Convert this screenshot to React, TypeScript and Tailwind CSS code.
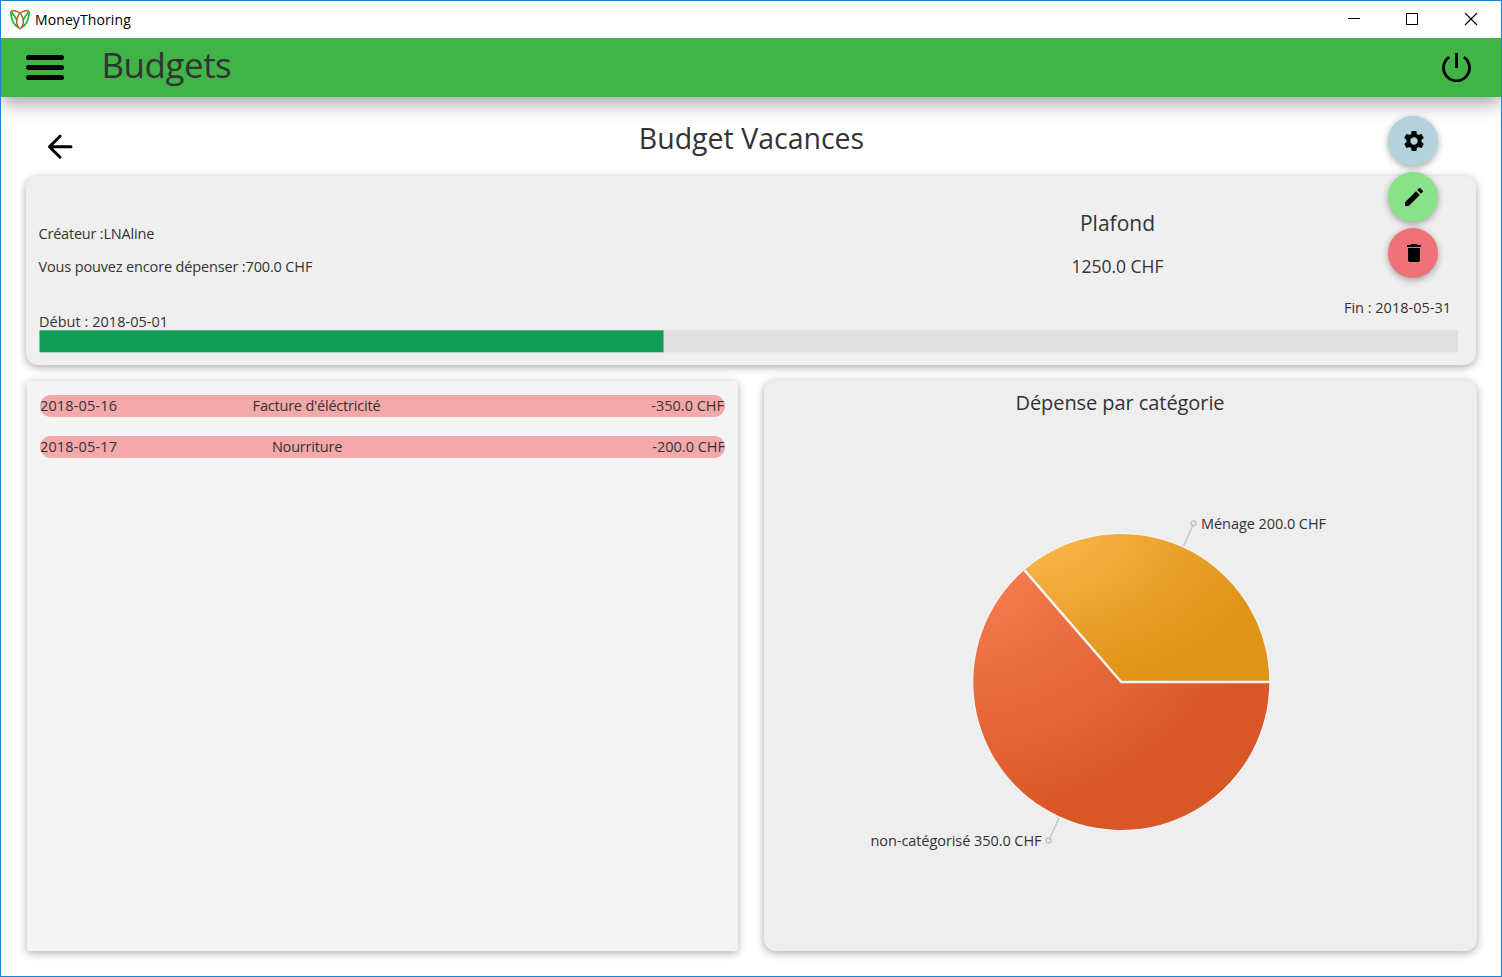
import type { ReactNode } from "react";

const operations = [
  { date: "2018-05-16", label: "Facture d'éléctricité", amount: "-350.0 CHF", labelClass: "w-[553px]", amountClass: "pr-px" },
  { date: "2018-05-17", label: "Nourriture", amount: "-200.0 CHF", labelClass: "w-[534px]", amountClass: "" },
];

function Logo() {
  return (
    <svg width="20" height="20" viewBox="0 0 20 20" fill="none" strokeWidth="1.7">
      <path d="M0.900 1.500C0.800 8 3 14.500 8.500 17.500M1 1.500C3.500 4 5 6 7 10.500" stroke="#19b52b" />
      <path d="M19.100 1.500C19.200 8 17 14.500 11.500 17.500M19 1.500C16.500 4 15 6 13 10.500" stroke="#19b52b" />
      <path d="M1 1C8 -0.500 13.500 5 13.300 12C13.200 15 12 17.500 10 19M19 1C12 -0.500 6.500 5 6.700 12C6.800 15 8 17.500 10 19" stroke="#b5622b" strokeWidth="1.5" />
    </svg>
  );
}

function TitleBar() {
  return (
    <div className="relative z-20 flex h-[37px] shrink-0 items-center bg-white pl-[9px]">
      <Logo />
      <span className="ml-[5px] text-[14px] tracking-[0.1px] text-black">MoneyThoring</span>
      <svg className="mb-px ml-auto mr-[22px]" width="132" height="14" viewBox="0 0 132 14" fill="none" stroke="#000" shapeRendering="crispEdges">
        <path d="M1 6.500H13" />
        <rect x="59.500" y="1.500" width="11" height="11" />
        <path d="M118 1L130 13M130 1L118 13" strokeWidth="1.100" shapeRendering="auto" />
      </svg>
    </div>
  );
}

function Header() {
  return (
    <header className="relative z-10 flex h-[59px] shrink-0 items-center bg-[#40b446] pl-[25px] pr-[30px] shadow-[0_6px_18px_rgba(0,0,0,0.38)]">
      <svg className="mb-px" width="38" height="26" viewBox="0 0 38 26" stroke="#000" strokeWidth="5" strokeLinecap="round">
        <path d="M2.500 3.500H35.500M2.500 13.500H35.500M2.500 23.500H35.500" />
      </svg>
      <h1 className="mb-[5px] ml-[37.5px] text-[35px] leading-[54px] tracking-[-0.5px] text-[#333]">Budgets</h1>
      <svg className="mb-px ml-auto" width="30" height="30" viewBox="0 0 30 30" fill="none" stroke="#000" strokeWidth="2.800">
        <path d="M15.500 1V16M8.100 5.100A13 13 0 1 0 22.900 5.100" />
      </svg>
    </header>
  );
}

function RoundButton({ color, children }: { color: string; children: ReactNode }) {
  return (
    <button className={`flex size-[50px] items-center justify-center rounded-full pl-[2px] shadow-[0_2px_7px_rgba(0,0,0,0.35)] ${color}`}>
      <svg width="24" height="24" viewBox="0 0 24 24" fill="#000">{children}</svg>
    </button>
  );
}

function Actions() {
  return (
    <div className="absolute right-[63px] top-[115px] z-20 flex flex-col gap-[6px]">
      <RoundButton color="bg-[#b3d2dc]">
        <path d="M19.430 12.980c.04-.32.07-.64.07-.98s-.03-.66-.07-.98l2.110-1.650c.19-.15.24-.42.12-.64l-2-3.460c-.12-.22-.39-.3-.61-.22l-2.490 1c-.52-.4-1.080-.73-1.690-.98l-.38-2.650C14.460 2.180 14.250 2 14 2h-4c-.25 0-.46.18-.49.42l-.38 2.650c-.61.25-1.170.59-1.690.98l-2.490-1c-.23-.09-.49 0-.61.22l-2 3.460c-.13.22-.07.49.12.64l2.110 1.650c-.04.32-.07.65-.07.98s.03.66.07.98l-2.110 1.650c-.19.15-.24.42-.12.64l2 3.460c.12.22.39.3.61.22l2.490-1c.52.4 1.080.73 1.690.98l.38 2.650c.03.24.24.42.49.42h4c.25 0 .46-.18.49-.42l.38-2.650c.61-.25 1.170-.59 1.690-.98l2.490 1c.23.09.49 0 .61-.22l2-3.460c.12-.22.07-.49-.12-.64l-2.110-1.650zM12 15.700c-2.040 0-3.700-1.660-3.700-3.700s1.660-3.700 3.700-3.700 3.700 1.660 3.700 3.700-1.660 3.700-3.700 3.700z" />
      </RoundButton>
      <RoundButton color="bg-[#8ae288]">
        <path d="M3 17.250V21h3.750L17.810 9.940l-3.750-3.750L3 17.250zM20.710 7.040c.39-.39.39-1.020 0-1.410l-2.340-2.340c-.39-.39-1.020-.39-1.410 0l-1.830 1.830 3.750 3.750 1.830-1.830z" />
      </RoundButton>
      <RoundButton color="bg-[#ef7278]">
        <path d="M6 19c0 1.100.9 2 2 2h8c1.100 0 2-.9 2-2V7H6v12zM19 4h-3.500l-1-1h-5l-1 1H5v2h14V4z" />
      </RoundButton>
    </div>
  );
}

function Summary() {
  return (
    <section className="mr-px flex h-[189px] flex-col rounded-[12px] bg-[#efefef] pl-[13px] pr-[18px] shadow-[0_2px_8px_rgba(0,0,0,0.35)]">
      <div className="flex h-[120px]">
        <div className="-ml-[0.500px] flex flex-col gap-[11px] pt-[47px]">
          <p className="leading-[22px] tracking-[-0.2px]">Créateur :LNAline</p>
          <p className="leading-[22px] tracking-[-0.15px]">Vous pouvez encore dépenser :700.0 CHF</p>
        </div>
        <div className="ml-auto mr-[240.5px] flex w-[200px] flex-col items-center pt-[32px]">
          <p className="text-[21px] leading-[30px]">Plafond</p>
          <p className="mt-[16px] text-[17.5px] leading-[24px]">1250.0 CHF</p>
        </div>
      </div>
      <div className="flex h-[34px] justify-between">
        <span className="pt-[15px] leading-[22px] tracking-[0.03px]">Début : 2018-05-01</span>
        <span className="mr-[7px] pt-px leading-[22px]">Fin : 2018-05-31</span>
      </div>
      <svg className="h-[23px] w-full shrink-0" width="1419" height="23" viewBox="0 0 1419 23" preserveAspectRatio="none">
        <rect x="0.500" y="0.300" width="1418.500" height="22" fill="#dfdfdf" />
        <rect x="0.500" y="0.300" width="624" height="22" fill="#129e59" />
      </svg>
    </section>
  );
}

function Operations() {
  return (
    <section className="mt-px flex w-[711px] flex-col gap-[19px] rounded-[2px] bg-[#f4f4f4] px-[13px] pt-[14px] shadow-[0_2px_8px_rgba(0,0,0,0.32)]">
      {operations.map((o) => (
        <div key={o.date} className="relative flex h-[22px] items-center justify-between overflow-hidden rounded-[11px] bg-[#f3a8a9] leading-[22px]">
          <span className="tracking-[0.14px]">{o.date}</span>
          <span className={`absolute left-0 text-center tracking-[-0.2px] ${o.labelClass}`}>{o.label}</span>
          <span className={o.amountClass}>{o.amount}</span>
        </div>
      ))}
    </section>
  );
}

function CategoryChart() {
  return (
    <section className="flex w-[713px] flex-col items-center rounded-[12px] bg-[#eee] shadow-[0_2px_8px_rgba(0,0,0,0.35)]">
      <h3 className="mr-px mt-[8px] text-[20px] leading-[30px] tracking-[-0.07px]">Dépense par catégorie</h3>
      <svg className="mt-[62px]" width="713" height="420" viewBox="764 480 713 420">
        <defs>
          <radialGradient id="menage" cx="0" cy="0" r="1">
            <stop offset="0" stopColor="#fdb84e" />
            <stop offset="1" stopColor="#e09418" />
          </radialGradient>
          <radialGradient id="autre" cx="0" cy="0" r="1">
            <stop offset="0" stopColor="#f77e52" />
            <stop offset="1" stopColor="#d95626" />
          </radialGradient>
        </defs>
        <circle cx="1121.300" cy="681.800" r="149" fill="#f5f5f5" />
        <path d="M1121.300 682H1269.300A148 148 0 0 0 1024.400 570.100Z" fill="url(#menage)" />
        <path d="M1121.300 682H1269.300A148 148 0 1 1 1024.400 570.100Z" fill="url(#autre)" />
        <path d="M1269.500 682H1121.300L1024.400 570.100" fill="none" stroke="#f4f4f4" strokeWidth="2.500" />
        <g stroke="#c6c6c6" strokeWidth="1.500" fill="none">
          <path d="M1183.500 546L1193.500 524M1059 818L1049 840" />
          <circle cx="1193.500" cy="523.500" r="2.500" />
          <circle cx="1048.500" cy="840.500" r="2.500" />
        </g>
        <g fill="#333" fontSize="14.500">
          <text x="1201" y="529" textLength="125">Ménage 200.0 CHF</text>
          <text x="870.500" y="846" textLength="171">non-catégorisé 350.0 CHF</text>
        </g>
      </svg>
    </section>
  );
}

export default function App() {
  return (
    <div className="relative flex h-[977px] w-[1502px] flex-col overflow-hidden border border-[#1883d7] bg-white font-['Open_Sans','Noto_Sans',sans-serif] text-[14.5px] text-[#333]">
      <TitleBar />
      <Header />
      <Actions />
      <main className="flex flex-1 flex-col pl-[25px] pr-[24px]">
        <div className="relative flex h-[79px] items-start justify-center pt-[20px]">
          <svg className="absolute left-[21px] top-[36px]" width="26" height="27" viewBox="0 0 26 27" fill="none" stroke="#000" strokeWidth="3" strokeLinecap="round" strokeLinejoin="round">
            <path d="M13 3.200L2.500 13.700L13 24.200M2.500 13.700H24" />
          </svg>
          <h2 className="text-[28.5px] leading-[42px]">Budget Vacances</h2>
        </div>
        <Summary />
        <div className="mt-[15px] flex h-[571px] justify-between pl-px">
          <Operations />
          <CategoryChart />
        </div>
      </main>
    </div>
  );
}
